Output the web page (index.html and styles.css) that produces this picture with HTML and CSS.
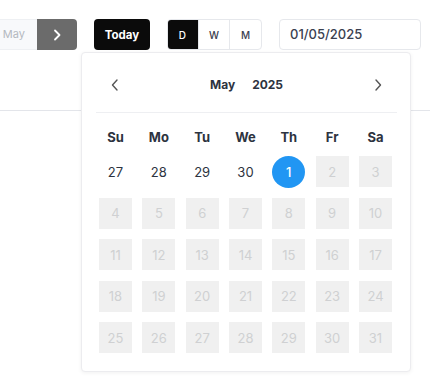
FILE: index.html
```html
<!DOCTYPE html>
<html>
<head>
<meta charset="utf-8">
<link rel="stylesheet" href="styles.css">
</head>
<body>
<div class="page">
  <div class="toolbar">
    <div class="range">
      <div class="range-input">1, May</div>
      <button class="range-next" aria-label="Next">
        <svg width="10" height="12" viewBox="0 0 10 12"><path d="M3 1.5 L7.5 6 L3 10.5" fill="none" stroke="#fff" stroke-width="1.8" stroke-linecap="round" stroke-linejoin="round"/></svg>
      </button>
    </div>
    <button class="today">Today</button>
    <div class="seg">
      <span class="seg-item active">D</span>
      <span class="seg-item">W</span>
      <span class="seg-item">M</span>
    </div>
    <div class="date-input">01/05/2025</div>
  </div>
  <div class="panel"></div>

  <div class="picker">
    <div class="picker-head">
      <span class="nav">
        <svg width="8" height="12" viewBox="0 0 8 12"><path d="M6 1 L1.5 6 L6 11" fill="none" stroke="#555" stroke-width="1.4" stroke-linecap="round" stroke-linejoin="round"/></svg>
      </span>
      <div class="title"><span>May</span><span>2025</span></div>
      <span class="nav">
        <svg width="8" height="12" viewBox="0 0 8 12"><path d="M2 1 L6.5 6 L2 11" fill="none" stroke="#555" stroke-width="1.4" stroke-linecap="round" stroke-linejoin="round"/></svg>
      </span>
    </div>
    <div class="weekdays">
      <span>Su</span><span>Mo</span><span>Tu</span><span>We</span><span>Th</span><span>Fr</span><span>Sa</span>
    </div>
    <div class="days">
      <span class="day">27</span><span class="day">28</span><span class="day">29</span><span class="day">30</span><span class="day sel">1</span><span class="day off">2</span><span class="day off">3</span>
      <span class="day off">4</span><span class="day off">5</span><span class="day off">6</span><span class="day off">7</span><span class="day off">8</span><span class="day off">9</span><span class="day off">10</span>
      <span class="day off">11</span><span class="day off">12</span><span class="day off">13</span><span class="day off">14</span><span class="day off">15</span><span class="day off">16</span><span class="day off">17</span>
      <span class="day off">18</span><span class="day off">19</span><span class="day off">20</span><span class="day off">21</span><span class="day off">22</span><span class="day off">23</span><span class="day off">24</span>
      <span class="day off">25</span><span class="day off">26</span><span class="day off">27</span><span class="day off">28</span><span class="day off">29</span><span class="day off">30</span><span class="day off">31</span>
    </div>
  </div>
</div>
</body>
</html>
```
FILE: styles.css
```css
* { box-sizing: border-box; }
html, body { margin: 0; padding: 0; background: #fff; }
body { font-family: Inter, "Noto Sans", "DejaVu Sans", sans-serif; color: #2d3340; }
.page { position: relative; width: 430px; height: 392px; overflow: hidden; }

.toolbar { display: flex; align-items: center; gap: 17px; padding-top: 19px; margin-left: -43px; height: 50px; }
.range { display: flex; height: 31px; }
.range-input { width: 80px; height: 31px; background: #f8f9fb; border: 1px solid #eef0f3; border-right: none; border-radius: 4px 0 0 4px; font-size: 11px; color: #b4b8bf; text-align: right; padding-right: 12px; line-height: 29px; white-space: nowrap; overflow: hidden; }
.range-next { width: 40px; height: 31px; border: none; background: #6b6b6b; border-radius: 0 4px 4px 0; display: flex; align-items: center; justify-content: center; padding: 0; }
.today { width: 56px; height: 31px; background: #0b0b0b; color: #fff; border: none; border-radius: 4px; font-family: inherit; font-size: 11.5px; font-weight: 700; padding: 0; }
.seg { display: flex; width: 95px; height: 31px; border: 1px solid #e6e8ec; border-radius: 4px; overflow: hidden; }
.seg-item { flex: 1; display: flex; align-items: center; justify-content: center; font-size: 10px; font-weight: 500; color: #3a4050; }
.seg-item + .seg-item { border-left: 1px solid #e6e8ec; }
.seg-item.active { background: #0b0b0b; color: #fff; margin: -1px 0 -1px -1px; }
.date-input { width: 142px; height: 31px; border: 1px solid #e6e8ec; border-radius: 4px; font-size: 13px; font-weight: 500; color: #3a4050; padding-left: 10px; line-height: 29px; }

.panel { height: 61px; border-bottom: 1px solid #e3e5ea; }

.picker { position: absolute; left: 81px; top: 52px; width: 330px; height: 320px; background: #fff; border: 1px solid #ececef; border-radius: 4px; box-shadow: 0 1px 4px rgba(0,0,0,0.06); padding: 0 13px 0 14px; }
.picker-head { height: 60px; border-bottom: 1px solid #eeeff2; display: flex; align-items: center; justify-content: space-between; padding: 4px 15px 0 15px; }
.nav { display: flex; align-items: center; width: 8px; height: 12px; }
.title { display: flex; gap: 17px; font-size: 12px; font-weight: 700; color: #2d3340; }
.weekdays { display: grid; grid-template-columns: repeat(7, 33px); column-gap: 10.33px; margin: 0 3px; height: 32px; margin-top: 8px; align-items: center; }
.weekdays span { text-align: center; font-size: 13px; font-weight: 700; color: #2d3340; }
.days { display: grid; grid-template-columns: repeat(7, 33px); grid-auto-rows: 31px; column-gap: 10.33px; row-gap: 10.5px; margin: 3px 3px 0; }
.day { display: flex; align-items: center; justify-content: center; font-size: 13px; color: #2d3340; }
.day.off { background: #f0f0f0; color: #cfd0d2; }
.day.sel { background: #2196f3; color: #fff; border-radius: 50%; font-weight: 500; height: 32px; }
```
